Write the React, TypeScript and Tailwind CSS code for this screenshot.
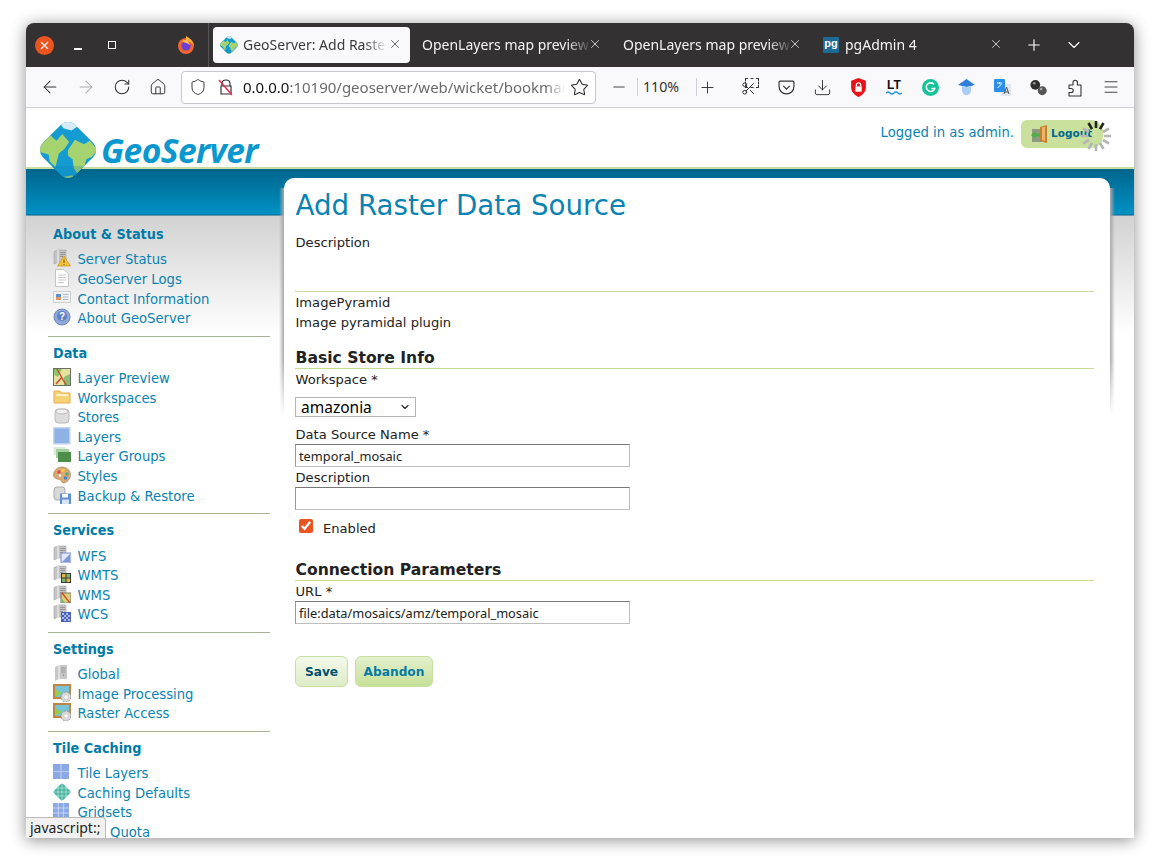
import React, { useId } from "react";
import { ArrowLeft, ArrowRight, RotateCw, House, Shield, Star, Minus, Plus, Download, Menu, X, ChevronDown, Scissors } from "lucide-react";

const Globe = ({ size, className = "" }: { size: number; className?: string }) => {
  const id = useId();
  return (
    <svg width={size} height={size} viewBox="0 0 56 56" className={`shrink-0 ${className}`}>
      <defs>
        <clipPath id={id}><rect x="8" y="8" width="40" height="40" rx="9" transform="rotate(45 28 28)" /></clipPath>
      </defs>
      <rect x="8" y="8" width="40" height="40" rx="9" transform="rotate(45 28 28)" fill="#149bd2" />
      <g clipPath={`url(#${id})`}>
        <path d="M0 0H56V18L44 10 28 4Z" fill="#6cc4e6" />
        <path d="M1 24 11 14 18 20 23 14 29 21 25 27 20 31 17 43 12 38 11 32 4 30Z" fill="#a4d36f" />
        <path d="M28 28 34 19 42 23 47 20 54 28 49 34 44 36 42 44 37 50 33 44 32 36 28 33Z" fill="#a4d36f" />
        <path d="M20 3 30 1 37 7 31 11 24 9Z" fill="#d5edf7" />
        <path d="M21 52 32 50 34 56H21Z" fill="#a4d36f" />
        <path d="M0 42 H56 V56 H0Z" fill="#0c7fb1" opacity="0.25" />
      </g>
    </svg>
  );
};

const S = ({ children }: { children: React.ReactNode }) => (
  <svg width="18" height="18" viewBox="0 0 18 18" className="shrink-0">{children}</svg>
);
const Srv = () => (
  <>
    <path d="M1 2.5 5 1H13V13H5L1 15Z" fill="#c4c4c4" stroke="#a2a2a2" strokeWidth=".6" />
    <path d="M5 1V14" stroke="#ececec" strokeWidth="1.2" />
    <path d="M7 3.5H12M7 5.5H12M7 7.5H10" stroke="#8a8a8a" strokeWidth=".8" />
  </>
);
const Icons: Record<string, React.ReactNode> = {
  status: <S><Srv /><path d="M11 7 17.5 17H4.5Z" fill="#f5c33b" stroke="#c98f16" strokeWidth=".7" /><path d="M11 10.5V14M11 15V16" stroke="#7a4a10" strokeWidth="1" /></S>,
  logs: <S><path d="M2.5.5H11L15.5 5V17.5H2.5Z" fill="#fff" stroke="#c4c4c4" /><path d="M5 6H13M5 8.5H13M5 11H13M5 13.5H11" stroke="#c9c9c9" /></S>,
  contact: <S><rect x=".5" y="3.5" width="17" height="11" fill="#f3f3f3" stroke="#cfcfcf" /><rect x="3" y="6" width="5" height="6" fill="#d89a62" /><rect x="3" y="6" width="5" height="3" fill="#5f93d0" /><path d="M10 6.5H15.5M10 9H15.5M10 11.5H15.5" stroke="#a9b8cf" /></S>,
  about: <S><circle cx="9" cy="9" r="8" fill="#8fa8d8" stroke="#7188bd" /><circle cx="9" cy="8" r="5" fill="#5a80c6" /><text x="9" y="12" fontSize="10" fontWeight="700" fill="#fff" textAnchor="middle" fontFamily="Liberation Sans">?</text></S>,
  preview: <S><rect x=".5" y=".5" width="17" height="17" fill="#e6e2a0" stroke="#6a6f66" /><path d="M1 1H9L5 9 1 7Z" fill="#8ec46c" /><path d="M11 9 17 6V17H11Z" fill="#89bd72" /><path d="M4 1 13 17M9 9 3 16" stroke="#d4452d" strokeWidth="1.4" /></S>,
  workspace: <S><path d="M1 3H7L8 5H17V15H1Z" fill="#f6d277" stroke="#eaa94d" /><path d="M3 7H15" stroke="#fff2c4" strokeWidth="2" /></S>,
  stores: <S><rect x="2" y="2" width="14" height="14" rx="3.5" fill="#dcdcdc" stroke="#b8b8b8" /><ellipse cx="9" cy="4.5" rx="6" ry="2.4" fill="#f0f0f0" stroke="#bcbcbc" /></S>,
  layers: <S><rect x=".8" y=".8" width="16" height="16" fill="#8fb2e6" stroke="#c1d2ee" strokeWidth="1.4" /></S>,
  groups: <S><rect x=".5" y="1" width="12" height="8" fill="#dcecd7" /><rect x="3" y="3" width="13" height="9" fill="#a5cf9c" /><rect x="5" y="6" width="13" height="10" fill="#4d8f4a" /></S>,
  styles: <S><path d="M9 1C14 1 18 5 17.5 9.5 17 13 14 17 10 17 8.5 17 9 14 6.5 13.5 3.5 13 .5 12 .5 9 .5 5 4 1 9 1Z" fill="#d9a877" stroke="#a5734a" strokeWidth=".6" /><circle cx="6" cy="6" r="1.7" fill="#e4483c" /><circle cx="10" cy="4.5" r="1.7" fill="#f0cf3a" /><circle cx="14" cy="8" r="1.7" fill="#4caf7d" /><circle cx="12.5" cy="12" r="1.7" fill="#3f86c9" /><circle cx="7" cy="9.5" r="1.2" fill="#fff" /></S>,
  backup: <S><rect x="1" y="1" width="11" height="13" rx="3" fill="#d9d9d9" stroke="#aaa" /><rect x="7" y="7.5" width="11" height="10.5" fill="#5f8fd6" /><rect x="9" y="8" width="6" height="3.5" fill="#fff" /><rect x="9" y="13.5" width="7" height="4.5" fill="#d7e4f5" /></S>,
  wfs: <S><Srv /><rect x="8" y="8" width="10" height="10" fill="#dfe6f7" stroke="#7d90c8" /><path d="M17 9V17H9Z" fill="#8098d8" /></S>,
  wmts: <S><Srv /><rect x="8" y="8" width="10" height="10" fill="#3b3b3b" /><rect x="9" y="9" width="3.5" height="3.5" fill="#e0b63d" /><rect x="13.5" y="9" width="3.5" height="3.5" fill="#79b76a" /><rect x="9" y="13.5" width="3.5" height="3.5" fill="#79b76a" /><rect x="13.5" y="13.5" width="3.5" height="3.5" fill="#e0b63d" /></S>,
  wms: <S><Srv /><rect x="8" y="8" width="10" height="10" fill="#e0cf7a" stroke="#7b7b6b" /><path d="M9 8 17 18" stroke="#d4452d" strokeWidth="1.3" /><path d="M8.5 13 12 18H8.5Z" fill="#7fb86a" /></S>,
  wcs: <S><Srv /><rect x="8" y="8" width="10" height="10" fill="#4a62b8" /><path d="M9 9h2v2H9zM13 9h2v2h-2zM11 11h2v2h-2zM15 11h2v2h-2zM9 13h2v2H9zM13 13h2v2h-2zM11 15h2v2h-2zM15 15h2v2h-2z" fill="#a9b8ea" /></S>,
  global: <S><path d="M2 3 6 1H14V15H6L2 17Z" fill="#c8c8c8" /><path d="M6 1V16" stroke="#eee" strokeWidth="1.2" /><path d="M8 4H12.5M8 6H12.5M8 8H12.5" stroke="#8a8a8a" strokeWidth=".8" /><circle cx="10.5" cy="11" r=".8" fill="#4caf50" /></S>,
  image: <S><rect width="18" height="15" fill="#c28443" /><rect x="2" y="2" width="14" height="11" fill="#79c3d8" /><path d="M2 5 9 9 2 13Z" fill="#8fd14f" /><circle cx="13" cy="13" r="5" fill="#d7d7d7" stroke="#999" strokeDasharray="2 1" /><circle cx="13" cy="13" r="1.6" fill="#fff" /></S>,
  tiles: <S><rect y="1" width="16" height="15" fill="#8aa9e4" /><path d="M8 1V16M0 8.5H16" stroke="#b8ccf0" strokeWidth="1.2" /></S>,
  caching: <S><rect x="2.6" y="2.6" width="12.8" height="12.8" rx="2" transform="rotate(45 9 9)" fill="#47b5a0" /><path d="M9 0V18M0 9H18M5 2V16M13 2V16M2 5H16M2 13H16" stroke="#bfe6e0" strokeWidth=".7" /></S>,
  grid: <S><rect y="1" width="16" height="15" fill="#8aa9e4" /><path d="M5.3 1V16M10.6 1V16M0 6H16M0 11H16" stroke="#c3d4f2" strokeWidth="1" /></S>,
  quota: <S><rect x="2" y="3" width="13" height="12" fill="#ccc" /></S>,
};

const sections: { title: string; items: [string, string][] }[] = [
  { title: "About & Status", items: [["status", "Server Status"], ["logs", "GeoServer Logs"], ["contact", "Contact Information"], ["about", "About GeoServer"]] },
  { title: "Data", items: [["preview", "Layer Preview"], ["workspace", "Workspaces"], ["stores", "Stores"], ["layers", "Layers"], ["groups", "Layer Groups"], ["styles", "Styles"], ["backup", "Backup & Restore"]] },
  { title: "Services", items: [["wfs", "WFS"], ["wmts", "WMTS"], ["wms", "WMS"], ["wcs", "WCS"]] },
  { title: "Settings", items: [["global", "Global"], ["image", "Image Processing"], ["image", "Raster Access"]] },
  { title: "Tile Caching", items: [["tiles", "Tile Layers"], ["caching", "Caching Defaults"], ["grid", "Gridsets"], ["quota", "Disk Quota"]] },
];

const Sidebar = () => (
  <aside className="w-[258px] shrink-0 pl-[22px] pr-[14px] pt-[55px]">
    {sections.map((s, i) => (
      <section key={s.title} className={i < 4 ? "border-b-[1.5px] border-[#a8b394] pb-[7px] mb-[5.8px]" : ""}>
        <h3 className="pl-[5px] h-[20px] leading-[21px] text-[14.3px] font-bold text-[#007ba8] font-['DejaVu_Sans_Condensed','DejaVu_Sans',sans-serif]">{s.title}</h3>
        <ul className="mt-[6.5px]">
          {s.items.map(([ic, label]) => (
            <li key={label} className="h-[19.6px] flex items-center pl-[5px] text-[13.2px] text-[#0a83b1]">
              <span className="w-[24.5px] -mt-[4px]">{Icons[ic]}</span>
              {label}
            </li>
          ))}
        </ul>
      </section>
    ))}
  </aside>
);

const Label = ({ children, className = "" }: { children: React.ReactNode; className?: string }) => (
  <div className={`h-[20px] leading-[22px] pl-[0.5px] text-[13.1px] text-[#222] ${className}`}>{children}</div>
);
const SectionTitle = ({ children, className = "" }: { children: React.ReactNode; className?: string }) => (
  <h2 className={`h-[23px] pl-[0.5px] leading-[24px] text-[15.6px] font-bold text-[#222] border-b border-[#c5dc92] ${className}`}>{children}</h2>
);
const Field = ({ value }: { value: string }) => (
  <input
    readOnly
    value={value}
    className="block w-[335px] h-[23px] px-[3px] text-[12.8px] text-[#222] bg-white border border-[#bdbdbd] border-t-[#777] border-l-[#999] outline-none font-['Noto_Sans',sans-serif]"
  />
);

const Main = () => (
  <main className="relative flex-1 mt-[9px] mr-[24px] bg-white rounded-t-[10px] pl-[11px] pr-[16px] h-[700px]">
    <div className="absolute top-[10px] right-full w-[5px] h-[228px] bg-gradient-to-l from-[#a9a9a9] to-transparent [mask-image:linear-gradient(to_bottom,#000_75%,transparent)]" />
    <div className="absolute top-[10px] left-full w-[5px] h-[228px] bg-gradient-to-r from-[#a9a9a9] to-transparent [mask-image:linear-gradient(to_bottom,#000_75%,transparent)]" />
    <h1 className="h-[54px] leading-[56px] text-[27.7px] text-[#0a83b1] pl-[0.5px]">Add Raster Data Source</h1>
    <Label>Description</Label>
    <div className="h-[40px] border-b border-[#c9d9a4]" />
    <Label>ImagePyramid</Label>
    <Label>Image pyramidal plugin</Label>
    <SectionTitle className="mt-[14px]">Basic Store Info</SectionTitle>
    <Label>Workspace *</Label>
    <div className="relative mt-[8px] w-[121px] h-[20px]">
      <select className="appearance-none block w-full h-full pl-[5px] py-0 leading-[18px] border border-[#b5b5b5] bg-white text-[15.5px] text-black font-['Noto_Sans',sans-serif]" defaultValue="amazonia">
        <option>amazonia</option>
      </select>
      <ChevronDown size={12} strokeWidth={2.2} className="absolute right-[5px] top-[4px] text-[#222] pointer-events-none" />
    </div>
    <Label className="mt-[7px]">Data Source Name *</Label>
    <Field value="temporal_mosaic" />
    <Label>Description</Label>
    <Field value="" />
    <label className="flex items-center h-[18px] mt-[9px] pl-[4px] text-[13.1px] text-[#222]">
      <input type="checkbox" checked readOnly className="w-[14px] h-[14px] -mt-[4px] accent-[#e95420]" />
      <span className="ml-[10px] pt-[1px]">Enabled</span>
    </label>
    <SectionTitle className="mt-[21px]">Connection Parameters</SectionTitle>
    <Label>URL *</Label>
    <Field value="file:data/mosaics/amz/temporal_mosaic" />
    <div className="flex gap-[7px] mt-[32px]">
      <button className="w-[53px] h-[31px] pt-[1px] rounded-[6px] border border-[#c8dfa0] bg-gradient-to-b from-[#f4f9ea] to-[#deecc6] text-[12.2px] font-bold text-[#00526f]">Save</button>
      <button className="w-[78px] h-[31px] pt-[1px] rounded-[6px] border border-[#c8dfa0] bg-gradient-to-b from-[#e4f0cd] to-[#c6e097] text-[12.2px] font-bold text-[#007ba8]">Abandon</button>
    </div>
  </main>
);

const Spinner = () => (
  <svg width="36" height="36" viewBox="0 0 36 36" className="absolute -right-[11px] -top-[2px]">
    {Array.from({ length: 12 }).map((_, i) => (
      <line key={i} x1="18" y1="3" x2="18" y2="10" stroke={i === 0 || i === 1 || i === 11 ? "#222" : "#b5b5b5"} strokeWidth="2.6" transform={`rotate(${i * 30} 18 18)`} />
    ))}
  </svg>
);

const Header = () => (
  <header className="relative z-10 h-[61px] shrink-0 bg-white border-b-2 border-[#c8dd9f] flex justify-between pl-[14px] pr-[31px]">
    <div className="flex items-start pt-[14px]">
      <Globe size={64} className="-ml-[4px] -mt-[4px] -mr-[4px]" />
      <span className="ml-[5px] mt-[6px] text-[33.6px] leading-[44px] italic font-bold tracking-[-0.6px] text-[#0c98cf] font-['Open_Sans',sans-serif]">GeoServer</span>
    </div>
    <div className="flex items-start pt-[12px]">
      <span className="mt-[3px] text-[13.2px] leading-[20px] text-[#0a83b1]">Logged in as admin.</span>
      <div className="relative ml-[7px] w-[82px] h-[28px] rounded-l-[6px] rounded-r-[12px] bg-[#c9e19d] flex items-center pl-[10px]">
        <svg width="17" height="18" viewBox="0 0 17 18"><rect x="1" y="4" width="10" height="13" fill="#8f9a84" /><path d="M9 2 16 0V18L9 16Z" fill="#c77f2c" /><path d="M11 2.5 14 1.5V16L11 15Z" fill="#eab46a" /><path d="M0 10 4.5 6V8.5H9V11.5H4.5V14Z" fill="#4fae46" /></svg>
        <span className="ml-[3px] text-[10.5px] font-bold text-[#00688f]">Logout</span>
        <Spinner />
      </div>
    </div>
  </header>
);

const Tab = ({ title, icon, active, w, textW }: { title: string; icon?: React.ReactNode; active?: boolean; w: string; textW: string }) => (
  <div className={`relative h-[36px] flex items-center rounded-[4px] ${w} ${active ? "bg-[#f9f9fb] text-[#3b3b3b]" : "text-[#f4f4f4]"}`}>
    {icon}
    <span className={`${textW} whitespace-nowrap overflow-hidden text-[14px] -mt-[1px] [mask-image:linear-gradient(to_right,#000_85%,transparent)]`}>{title}</span>
    <X size={14} strokeWidth={1.3} className="absolute right-[8px] top-[10px]" />
  </div>
);

const TitleBar = () => (
  <div className="h-[44px] shrink-0 bg-[#333131] flex items-center font-['Noto_Sans',sans-serif]">
    <div className="w-[19px] h-[19px] ml-[9px] rounded-full bg-[#e95420] flex items-center justify-center text-white"><X size={13} strokeWidth={2} /></div>
    <div className="ml-[20px] w-[8px] h-[1.5px] bg-white mt-[8px]" />
    <div className="w-[8px] h-[8px] border border-white ml-[26px]" />
    <svg width="20" height="20" viewBox="0 0 20 20" className="ml-[60px]">
      <circle cx="10" cy="11" r="8" fill="#f0652f" />
      <path d="M10 1C13 3 17 5 18 11 16 7 13 6 10 6Z" fill="#fbb03b" />
      <circle cx="10" cy="11" r="4.6" fill="#6b3fd1" />
      <path d="M6 6C8 8 12 8 14 10 13 5 9 4 6 6Z" fill="#ffbd4f" />
    </svg>
    <div className="ml-[12px] w-px h-[44px] bg-[#555]" />
    <div className="ml-[4px] flex items-center">
      <Tab active w="w-[197px]" textW="w-[144px]" title="GeoServer: Add Raster Data Source" icon={<span className="ml-[6px] mr-[4px]"><Globe size={20} /></span>} />
      <Tab w="w-[200px] pl-[12px]" textW="w-[170px]" title="OpenLayers map preview" />
      <Tab w="w-[200px] pl-[13px]" textW="w-[170px]" title="OpenLayers map preview" />
      <Tab w="w-[201px] pl-[13px]" textW="w-[90px]" title="pgAdmin 4" icon={<span className="mr-[6px] w-[16px] h-[16px] bg-[#1d6a94] text-white text-[11px] font-bold leading-[13px] text-center rounded-[1px] font-['Liberation_Sans',sans-serif]">pg</span>} />
    </div>
    <Plus size={18} strokeWidth={1.5} className="ml-[14px] text-white" />
    <ChevronDown size={20} strokeWidth={1.3} className="ml-[21px] text-white" />
  </div>
);

const B = ({ children, dim }: { children: React.ReactNode; dim?: boolean }) => (
  <div className={`w-[36px] h-[36px] flex items-center justify-center shrink-0 ${dim ? "text-[#aaa]" : "text-[#333]"}`}>{children}</div>
);

const Toolbar = () => (
  <div className="h-[41px] shrink-0 bg-[#f9f9fb] border-b border-[#cfcfd8] flex items-center pl-[6px] font-['Noto_Sans',sans-serif]">
    <B><ArrowLeft size={20} strokeWidth={1.25} /></B>
    <B dim><ArrowRight size={20} strokeWidth={1.25} /></B>
    <B><RotateCw size={18} strokeWidth={1.4} /></B>
    <B><House size={18} strokeWidth={1.3} /></B>
    <div className="ml-[5px] w-[415px] h-[33px] bg-white border border-[#c8c8cc] rounded-[4px] flex items-center pl-[7px] relative">
      <Shield size={18} strokeWidth={1.3} className="text-[#333]" />
      <svg width="16" height="18" viewBox="0 0 16 18" className="ml-[11px]"><path d="M4 8V5.5C4 3 6 2 8 2S12 3 12 5.5V8M3 8H13V16H3Z" fill="none" stroke="#333" strokeWidth="1.2" /><path d="M1 2 14 17" stroke="#e22850" strokeWidth="1.4" /></svg>
      <span className="ml-[9px] w-[322px] overflow-hidden whitespace-nowrap text-[15px] text-[#6b6b6b] [mask-image:linear-gradient(to_right,#000_94%,transparent)]"><span className="text-[#111]">0.0.0.0</span>:10190/geoserver/web/wicket/bookmarkable/org.geoserver</span>
      <Star size={19} strokeWidth={1.3} className="absolute right-[6px] top-[6px] text-[#222]" />
    </div>
    <div className="ml-[14px] w-[18px] flex justify-center"><Minus size={18} strokeWidth={1.2} className="text-[#333]" /></div>
    <div className="ml-[9px] w-px h-[18px] bg-[#cfcfd8]" />
    <span className="w-[58px] pr-[12px] text-center text-[14.2px] text-[#333]">110%</span>
    <div className="w-px h-[18px] bg-[#cfcfd8]" />
    <div className="w-[20px] flex justify-center"><Plus size={19} strokeWidth={1.2} className="text-[#333]" /></div>
    <div className="ml-[15px] flex">
      <B><div className="relative w-[18px] h-[18px]"><div className="absolute right-0 top-0 w-[14px] h-[10px] border border-dashed border-[#333]" /><Scissors size={15} strokeWidth={1.6} className="absolute left-0 bottom-0 text-[#333]" /></div></B>
      <B><svg width="17" height="17" viewBox="0 0 16 16" fill="none" stroke="#333" strokeWidth="1.1"><path d="M2 2H14Q15 2 15 3V7C15 11 12 14 8 14S1 11 1 7V3Q1 2 2 2Z" /><path d="M5 6.5 8 9.5 11 6.5" /></svg></B>
      <B><Download size={19} strokeWidth={1.2} /></B>
      <B><svg width="17" height="19" viewBox="0 0 16 18"><path d="M8 0 15 2.5V9C15 13 12 16 8 18 4 16 1 13 1 9V2.5Z" fill="#e8131a" /><rect x="5" y="8" width="6" height="5" fill="#fff" /><path d="M6 8V6.5C6 4 10 4 10 6.5V8" fill="none" stroke="#fff" strokeWidth="1.2" /></svg></B>
      <B><div className="flex flex-col items-center leading-none"><span className="text-[12px] font-bold text-[#111] font-['Liberation_Sans',sans-serif]">LT</span><svg width="16" height="4" viewBox="0 0 16 4"><path d="M0 2Q2 0 4 2T8 2 12 2 16 2" fill="none" stroke="#1e90d6" strokeWidth="1.2" /></svg></div></B>
      <B><svg width="17" height="17" viewBox="0 0 17 17"><circle cx="8.5" cy="8.5" r="8.5" fill="#15c39a" /><path d="M12 5.5A4.3 4.3 0 1 0 12.7 9.5H9.5" fill="none" stroke="#fff" strokeWidth="1.6" /></svg></B>
      <B><svg width="17" height="16" viewBox="0 0 17 16"><path d="M8.5 0 17 6 8.5 8 0 6Z" fill="#2f7fdc" /><path d="M4 7 8.5 8 13 7V11C13 14 11 16 8.5 16S4 14 4 11Z" fill="#a9cdf5" /></svg></B>
      <B><svg width="17" height="17" viewBox="0 0 17 17"><rect x="7" y="5" width="10" height="12" fill="#e3e8ee" /><rect width="11" height="13" rx="1" fill="#2d8fe8" /><path d="M3 4H8M5.5 3V5M3.5 9 7.5 5" stroke="#fff" strokeWidth="1" /><path d="M10 15 12.5 8 15 15M11 13H14" fill="none" stroke="#555" strokeWidth="1" /></svg></B>
      <B><svg width="17" height="17" viewBox="0 0 16 16"><circle cx="5" cy="5.5" r="4.6" fill="#2e2e2e" /><circle cx="11.5" cy="11" r="4.2" fill="#555" /><circle cx="4" cy="4" r="1.2" fill="#999" /><circle cx="10.5" cy="9.5" r="1.2" fill="#aaa" /></svg></B>
      <div className="ml-[1px]"><B><svg width="18" height="19" viewBox="0 0 18 19" fill="none" stroke="#333" strokeWidth="1.1" strokeLinejoin="round"><path d="M3 7H7V4.5A2.2 2.2 0 0 1 11.4 4.5V7H15V18H3V14.5H5.2A2 2 0 0 0 5.2 10.5H3Z" /></svg></B></div>
      <B><Menu size={18} strokeWidth={1.2} /></B>
    </div>
  </div>
);

export default function App() {
  return (
    <div className="w-[1160px] h-[867px] bg-white pt-[23px] pl-[26px] overflow-hidden font-['DejaVu_Sans',sans-serif]">
      <div className="relative w-[1108px] h-[815px] flex flex-col rounded-t-[8px] overflow-hidden bg-white shadow-[0_2px_16px_rgba(0,0,0,0.45)]">
        <TitleBar />
        <Toolbar />
        <Header />
        <div className="flex-1 flex overflow-hidden bg-[linear-gradient(to_bottom,#00658c_0,#0091c4_45px,#005f85_46px,#d2d2d2_47px,#ffffff_165px)]">
          <Sidebar />
          <Main />
        </div>
        <div className="absolute left-0 bottom-0 z-20 h-[21px] w-[80px] bg-[#f1f1f1] border border-[#bbb] border-l-0 border-b-0 rounded-tr-[4px] pl-[4px] leading-[20px] text-[14px] text-[#222] font-['Noto_Sans',sans-serif]">javascript:;</div>
      </div>
    </div>
  );
}
